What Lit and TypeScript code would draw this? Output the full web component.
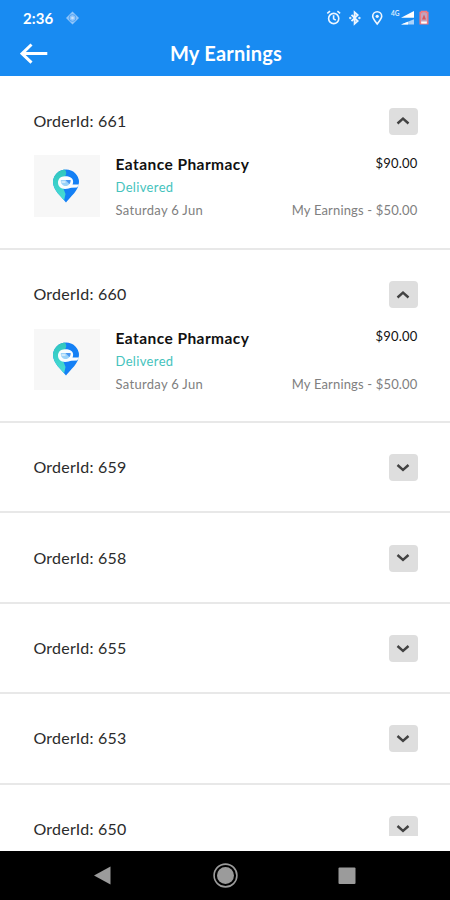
import { LitElement, html, css } from "lit";
import { customElement, property } from "lit/decorators.js";

interface Order {
  id: number;
  open: boolean;
}

const ORDERS: Order[] = [
  { id: 661, open: true },
  { id: 660, open: true },
  { id: 659, open: false },
  { id: 658, open: false },
  { id: 655, open: false },
  { id: 653, open: false },
  { id: 650, open: false },
];

@customElement("status-bar")
class StatusBar extends LitElement {
  static styles = css`
    :host {
      display: flex;
      align-items: center;
      height: 36px;
      padding: 0 20px 0 23px;
      color: #fff;
    }
    .time {
      font: 700 15px/36px Lato, sans-serif;
      letter-spacing: 0.1px;
      width: 42px;
      white-space: nowrap;
    }
    .icons {
      margin-left: auto;
      display: block;
    }
    .net {
      font: 700 6.5px Lato, sans-serif;
    }
  `;
  render() {
    return html`
      <span class="time">2:36</span>
      <svg width="15" height="14" viewBox="0 0 15 14">
        <path d="M7.5 .5 14 7 7.5 13.5 1 7Z" fill="#8fc5fa" />
        <circle cx="7.5" cy="7" r="3.4" fill="none" stroke="#4fa3f5" stroke-width="1" />
        <circle cx="7.5" cy="7" r="1.3" fill="#c9e3fc" />
      </svg>
      <svg class="icons" width="104" height="18" viewBox="0 0 104 18">
        <g fill="none" stroke="#eef6ff" stroke-width="1.6">
          <circle cx="7.7" cy="9.5" r="5.1" />
          <path d="M1.3 4.4 4 2.1M14.1 4.4 11.4 2.1M7.6 6.2V9.8L9.8 11.2" />
          <path d="M25.500 5.800 31.700 12 28.600 14.800V3.200L31.700 6 25.500 12.200" stroke-width="1.800" />
          <path d="M51.200 15C49 12.100 46.700 9.500 46.700 7.300A4.500 4.500 0 0 1 55.700 7.300C55.700 9.500 53.400 12.100 51.200 15Z" />
        </g>
        <circle cx="24.300" cy="9" r="1.200" fill="#d5e9fd" />
        <circle cx="33.400" cy="9" r="1.200" fill="#d5e9fd" />
        <circle cx="51.200" cy="7.300" r="1.600" fill="#eef6ff" />
        <text class="net" x="65" y="6.800" fill="#d5e9fd">4G</text>
        <path d="M75 8.800 88 2V8.800Z" fill="#fff" />
        <path d="M75 15.500 88 10.300V15.500Z" fill="#a9d2fb" />
        <path d="M75 15.500 82 12.700V15.500Z" fill="#fff" />
        <path d="M94.200 3.500H95.500V2.500H100.500V3.500H101.800V14.800H94.200Z" fill="#c3a3bd" stroke="#f0787f" stroke-width="1.500" />
        <path d="M95.200 12.500H100.800V14.600H95.200Z" fill="#fff" />
        <path d="M98 5.500 100 10.500H96Z" fill="#d8575c" />
      </svg>
    `;
  }
}

@customElement("brand-pin")
class BrandPin extends LitElement {
  static styles = css`
    :host {
      display: flex;
      align-items: center;
      justify-content: center;
      width: 66px;
      height: 61.5px;
      background: #f7f7f7;
    }
    svg {
      margin-right: 1px;
    }
  `;
  render() {
    return html`
      <svg width="28" height="34" viewBox="0 0 28 34">
        <defs>
          <clipPath id="pin">
            <path d="M14 33.500C10 28 1 21.500 1 13A13 12.500 0 0 1 27 13C27 21.500 18 28 14 33.500Z" />
          </clipPath>
          <linearGradient id="teal" x1="0" y1="0" x2="0" y2="1">
            <stop offset="0" stop-color="#2fc5bd" />
            <stop offset="1" stop-color="#4be0d8" />
          </linearGradient>
        </defs>
        <g clip-path="url(#pin)">
          <rect width="28" height="34" fill="#1480f5" />
          <path d="M0 0H12.500C14.500 2.500 15 5 12.500 8L9 13 13.500 25 11.500 34H0Z" fill="url(#teal)" />
        </g>
        <path d="M20 9.500C18.500 7.800 16 7.200 13 7.200C8.500 7.200 6 10 6 13.600C6 17.500 9 20 13 20C16 20 17.500 19 19.500 18.800L25 18.500 27.500 15.500H20.500C21.500 13.500 21.300 11 20 9.500Z" fill="#fafdff" />
        <path d="M8.800 11H18.500C18.800 14.500 16.500 17 13.800 17C11 17 8.500 15 8.800 11Z" fill="#9bd2f8" />
        <path d="M13.500 11H18.500C18.600 12.500 18.200 14 17.300 15Z" fill="#4896f2" />
        <path d="M9.500 13H13.500" stroke="#fff" stroke-width="1" />
      </svg>
    `;
  }
}

@customElement("order-row")
class OrderRow extends LitElement {
  @property({ attribute: false }) order!: Order;
  static styles = css`
    :host {
      display: block;
      flex: none;
      box-sizing: border-box;
      height: 90.4px;
      padding: 31.300px 32.500px 0 33.500px;
      border-bottom: 2px solid #e8e8e8;
      font-family: Lato, sans-serif;
    }
    :host([open]) {
      height: 173.200px;
    }
    .head {
      display: flex;
      justify-content: space-between;
      align-items: center;
      height: 27px;
    }
    .id {
      font-size: 16px;
      line-height: 14px;
      margin-top: -1px;
      letter-spacing: 0.22px;
      color: #2b2b2b;
    }
    .toggle {
      display: flex;
      align-items: center;
      justify-content: center;
      width: 28.500px;
      height: 27px;
      border-radius: 4px;
      background: #dedede;
    }
    .body {
      display: flex;
      margin-top: 20.500px;
    }
    .info,
    .sums {
      display: flex;
      flex-direction: column;
      white-space: nowrap;
    }
    .info {
      margin-left: 16px;
      margin-top: -1px;
    }
    .sums {
      margin-left: auto;
      align-items: flex-end;
      justify-content: space-between;
      height: 67.500px;
      margin-top: -2.500px;
    }
    .name {
      font-size: 15.500px;
      font-weight: 700;
      letter-spacing: 0.44px;
      color: #111;
      line-height: 20px;
    }
    .state {
      font-size: 13px;
      letter-spacing: 0.35px;
      color: #45c3bd;
      line-height: 26px;
    }
    .date,
    .earned {
      font-size: 13px;
      letter-spacing: 0.3px;
      color: #808080;
      line-height: 20px;
    }
    .earned {
      letter-spacing: 0.16px;
    }
    .price {
      font-size: 13px;
      letter-spacing: 0.2px;
      color: #111;
      line-height: 20px;
    }
  `;
  render() {
    const { id, open } = this.order;
    return html`
      <div class="head">
        <span class="id">OrderId: ${id}</span>
        <span class="toggle">
          <svg width="14" height="10" viewBox="0 0 14 10">
            <path
              d=${open ? "M1.500 7.500 7 2.500 12.500 7.500" : "M1.500 2 7 7 12.500 2"}
              fill="none" stroke="#424242" stroke-width="2.400" />
          </svg>
        </span>
      </div>
      ${open
        ? html`<div class="body">
            <brand-pin></brand-pin>
            <div class="info">
              <span class="name">Eatance Pharmacy</span>
              <span class="state">Delivered</span>
              <span class="date">Saturday 6 Jun</span>
            </div>
            <div class="sums">
              <span class="price">$90.00</span>
              <span class="earned">My Earnings - $50.00</span>
            </div>
          </div>`
        : null}
    `;
  }
}

@customElement("app-root")
class AppRoot extends LitElement {
  static styles = css`
    :host {
      display: flex;
      flex-direction: column;
      width: 450px;
      height: 900px;
      overflow: hidden;
      background: #fff;
      font-family: Lato, sans-serif;
    }
    .header {
      flex: none;
      height: 76px;
      background: #188bf2;
      color: #fff;
    }
    .bar {
      display: grid;
      grid-template-columns: 60px 1fr 60px;
      align-items: center;
      height: 35px;
    }
    .back {
      margin-left: 20px;
      display: block;
    }
    .title {
      text-align: center;
      font-size: 20px;
      font-weight: 700;
      letter-spacing: 0.22px;
      line-height: 35px;
      padding-left: 2px;
    }
    .list {
      display: flex;
      flex-direction: column;
      box-sizing: border-box;
      height: 759.500px;
      padding-top: 0.600px;
      overflow: hidden;
    }
    .nav {
      flex: none;
      margin-top: auto;
      display: flex;
      justify-content: center;
      height: 49px;
      background: #000;
    }
  `;
  render() {
    return html`
      <div class="header">
        <status-bar></status-bar>
        <div class="bar">
          <svg class="back" width="28" height="22" viewBox="0 0 28 22">
            <path d="M27.300 10.600H2M11.500 1.500 2 10.600 11.500 19.700" fill="none" stroke="#fff" stroke-width="3" />
          </svg>
          <span class="title">My Earnings</span>
        </div>
      </div>
      <div class="list">
        ${ORDERS.map((o) => html`<order-row .order=${o} ?open=${o.open}></order-row>`)}
      </div>
      <div class="nav">
        <svg width="450" height="49" viewBox="0 0 450 49">
          <path d="M94 24.500 110.500 15.500V33.500Z" fill="#9b9b9b" />
          <circle cx="225.500" cy="24.500" r="11.400" fill="none" stroke="#9b9b9b" stroke-width="1.600" />
          <circle cx="225.500" cy="24.500" r="8.500" fill="#9b9b9b" />
          <rect x="338.500" y="16.500" width="17" height="16.500" rx="1" fill="#9b9b9b" />
        </svg>
      </div>
    `;
  }
}
